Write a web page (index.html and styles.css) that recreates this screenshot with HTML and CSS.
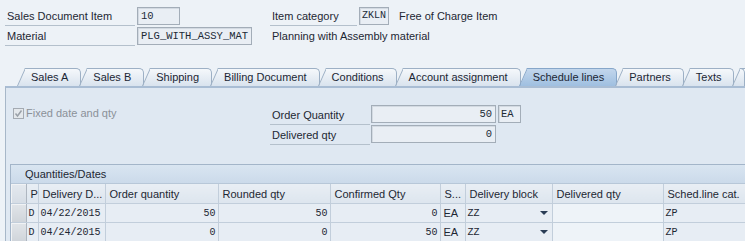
FILE: index.html
```html
<!DOCTYPE html>
<html>
<head>
	<meta charset="utf-8">
	<title>Schedule lines</title>
	<link rel="stylesheet" href="styles.css">
</head>
<body>
	<div class="hdr">
		<div class="hrow">
			<span class="lbl lbl-doc">Sales Document Item</span>
			<span class="fld fld-item">10</span>
			<span class="lbl lbl-cat">Item category</span>
			<span class="fld fld-cat">ZKLN</span>
			<span class="txt txt-cat">Free of Charge Item</span>
		</div>
		<div class="hrow">
			<span class="lbl lbl-doc">Material</span>
			<span class="fld fld-mat">PLG_WITH_ASSY_MAT</span>
			<span class="txt txt-mat">Planning with Assembly material</span>
		</div>
	</div>

	<div class="tabs">
		<div class="tab">Sales A</div>
		<div class="tab">Sales B</div>
		<div class="tab">Shipping</div>
		<div class="tab">Billing Document</div>
		<div class="tab">Conditions</div>
		<div class="tab">Account assignment</div>
		<div class="tab on">Schedule lines</div>
		<div class="tab">Partners</div>
		<div class="tab">Texts</div>
		<div class="tab tab-more"></div>
	</div>

	<div class="panel">
		<div class="prow">
			<div class="chk-col">
				<span class="chk">
					<svg width="11" height="11" viewBox="0 0 11 11"><path d="M2.5 5.5 L4.5 8 L8.5 2.5" fill="none" stroke="#9aa0a8" stroke-width="1.5"/></svg>
				</span>
				<span class="chk-txt">Fixed date and qty</span>
			</div>
			<div class="qty">
				<span class="lbl lbl-qty">Order Quantity</span>
				<span class="fld fld-qty">50</span>
				<span class="fld fld-unit">EA</span>
				<span class="lbl lbl-qty">Delivered qty</span>
				<span class="fld fld-qty">0</span>
				<span></span>
			</div>
		</div>

		<div class="grp">
			<div class="grp-title">Quantities/Dates</div>
			<table class="grid">
				<colgroup>
					<col style="width:15px"><col style="width:12px"><col style="width:67px"><col style="width:113px"><col style="width:112px"><col style="width:110px"><col style="width:25px"><col style="width:87px"><col style="width:111px"><col style="width:90px">
				</colgroup>
				<tr class="head">
					<th class="sel"></th>
					<th>P</th>
					<th>Delivery D...</th>
					<th>Order quantity</th>
					<th>Rounded qty</th>
					<th>Confirmed Qty</th>
					<th>S...</th>
					<th>Delivery block</th>
					<th>Delivered qty</th>
					<th>Sched.line cat.</th>
				</tr>
				<tr>
					<td class="sel"></td>
					<td class="mono">D</td>
					<td class="mono">04/22/2015</td>
					<td class="mono num">50</td>
					<td class="mono num">50</td>
					<td class="mono num">0</td>
					<td>EA</td>
					<td class="mono"><div class="dd">ZZ<span class="arrow"></span></div></td>
					<td class="inp"></td>
					<td class="mono">ZP</td>
				</tr>
				<tr>
					<td class="sel"></td>
					<td class="mono">D</td>
					<td class="mono">04/24/2015</td>
					<td class="mono num">0</td>
					<td class="mono num">0</td>
					<td class="mono num">50</td>
					<td>EA</td>
					<td class="mono"><div class="dd">ZZ<span class="arrow"></span></div></td>
					<td class="inp"></td>
					<td class="mono">ZP</td>
				</tr>
			</table>
		</div>
	</div>
</body>
</html>
```

FILE: styles.css
```css
html, body{
	margin: 0;
	height: 100%;
	overflow: hidden;
}
body{
	display: flex;
	flex-direction: column;
	background: #edf2f7;
	font-family: 'Liberation Sans', Arial, sans-serif;
	font-size: 11px;
	color: #1d2733;
}

/* header fields */
.hdr{
	padding: 6px 0 0 5px;
}
.hrow{
	display: flex;
	align-items: center;
	height: 20px;
}
.lbl{
	box-sizing: border-box;
	height: 20px;
	line-height: 20px;
	padding-left: 2px;
	border-bottom: 1px solid #b4c0cc;
	white-space: nowrap;
}
.lbl-doc{
	width: 130px;
	margin-right: 2px;
}
.lbl-cat{
	width: 87px;
	margin-left: 90px;
	margin-right: 2px;
}
.fld{
	box-sizing: border-box;
	height: 18px;
	line-height: 16px;
	padding: 0 3px;
	border: 1px solid #a3adb8;
	background: #e9eef4;
	box-shadow: inset 1px 1px 0 #d3dae2;
	font-family: 'Liberation Mono', 'Courier New', monospace;
	font-size: 10.5px;
	color: #202a36;
	white-space: nowrap;
}
.fld-item{ width: 43px; }
.fld-mat{ width: 115px; }
.fld-cat{ width: 30px; padding: 0 2px; font-size: 10px; }
.txt-cat{ margin-left: 10px; }
.txt-mat{ margin-left: 20px; }

/* tab strip */
.tabs{
	display: flex;
	flex-shrink: 0;
	height: 18px;
	margin-top: 22px;
	padding-left: 19px;
	overflow: hidden;
}
.tab{
	position: relative;
	z-index: 0;
	height: 18px;
	line-height: 19px;
	padding: 0 13px 0 14px;
	margin-left: -2px;
	white-space: nowrap;
	color: #1b2634;
}
.tab-more{
	width: 40px;
	padding: 0;
}
.tab::before{
	content: '';
	position: absolute;
	z-index: -1;
	left: 0;
	top: 0;
	bottom: 0;
	width: 14px;
	border-left: 1px solid #9db0c5;
	border-top: 1px solid #9db0c5;
	background: linear-gradient(#f5f8fb, #d9e3ee);
	transform-origin: bottom left;
	transform: skewX(-24deg);
}
.tab::after{
	content: '';
	position: absolute;
	z-index: -1;
	left: 8px;
	top: 0;
	right: 0;
	bottom: 0;
	border-top: 1px solid #9db0c5;
	border-right: 1px solid #9db0c5;
	border-top-right-radius: 5px;
	background: linear-gradient(#f5f8fb, #d9e3ee);
}
.tab.on::before, .tab.on::after{
	background: linear-gradient(#c2d6ec, #9fbfe0);
	border-color: #86a6c9;
}

/* tab page */
.panel{
	flex: 1;
	min-height: 0;
	overflow: hidden;
	margin-left: 5px;
	padding: 17px 0 0 4px;
	border-left: 1px solid #a7b7c8;
	border-top: 2px solid #a9bdd4;
	background: #dfe8f2;
}
.prow{
	display: flex;
}
.chk-col{
	width: 260px;
	display: flex;
	align-items: flex-start;
	padding-top: 3px;
	box-sizing: border-box;
}
.chk{
	box-sizing: border-box;
	width: 11px;
	height: 11px;
	margin-left: 3px;
	margin-right: 2px;
	border: 1px solid #a4aab2;
	background: #e4e8ec;
	display: flex;
}
.chk svg{
	margin: -1px;
}
.chk-txt{
	line-height: 11px;
	color: #8b9199;
}
.qty{
	display: grid;
	grid-template-columns: 100px 125px 24px;
	grid-auto-rows: 20px;
	column-gap: 1px;
	align-items: start;
}
.qty .fld{
	text-align: right;
}
.fld-unit{
	margin-left: 1px;
	text-align: left !important;
	padding: 0 2px;
}

/* table group */
.grp{
	margin-top: 19px;
	border-left: 1px solid #a3b5c9;
	border-top: 1px solid #a3b5c9;
}
.grp-title{
	height: 18px;
	line-height: 18px;
	padding-left: 14px;
	background: linear-gradient(#d9e5f1, #cbdaea);
	border-bottom: 1px solid #b7c7d8;
}
.grid{
	border-collapse: collapse;
	table-layout: fixed;
	width: 742px;
}
.grid th, .grid td{
	height: 18px;
	padding: 0 3px;
	border-right: 1px solid #c2cedb;
	border-bottom: 1px solid #c2cedb;
	text-align: left;
	font-weight: normal;
	white-space: nowrap;
	overflow: hidden;
}
.grid th{
	height: 19px;
	background: linear-gradient(#e8eef4, #dde5ee);
	padding-left: 4px;
}
.grid td{
	background: #e7edf4;
}
.grid .sel{
	padding: 0;
	background: linear-gradient(#e0e4e8, #cfd4da);
	border-right: 1px solid #aeb6c0;
	box-shadow: inset 1px 1px 0 #f1f3f5;
}
.grid th.sel{
	background: linear-gradient(#e4e9ef, #d6dde5);
}
.grid td.mono{
	font-family: 'Liberation Mono', 'Courier New', monospace;
	font-size: 10px;
	padding-left: 2px;
}
.grid td.num{
	text-align: right;
	padding-right: 2px;
}
.grid td.inp{
	background: #eef3f8;
}
.dd{
	display: flex;
	align-items: center;
	justify-content: space-between;
	padding-right: 1px;
}
.arrow{
	width: 0;
	height: 0;
	border-left: 4px solid transparent;
	border-right: 4px solid transparent;
	border-top: 4px solid #2a3c55;
}
```
